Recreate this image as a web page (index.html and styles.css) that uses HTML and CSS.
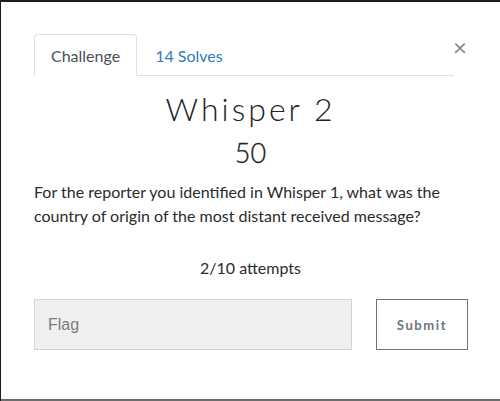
FILE: index.html
```html
<!DOCTYPE html>
<html>
<head>
<meta charset="utf-8">
<link rel="stylesheet" href="styles.css">
</head>
<body>
<div class="modal">
  <div class="tabs-row">
    <ul class="tabs">
      <li class="tab active">Challenge</li>
      <li class="tab link">14 Solves</li>
    </ul>
    <button class="close" aria-label="Close">&times;</button>
  </div>
  <h2 class="title">Whisper 2</h2>
  <h3 class="value">50</h3>
  <p class="desc">For the reporter you identified in Whisper 1, what was the country of origin of the most distant received message?</p>
  <p class="attempts">2/10 attempts</p>
  <div class="submit-row">
    <input class="flag" type="text" placeholder="Flag">
    <button class="submit">Submit</button>
  </div>
</div>
</body>
</html>
```

FILE: styles.css
```css
html, body {
  margin: 0;
  padding: 0;
}
body {
  background: #1b1c1f;
  width: 500px;
  height: 401px;
  overflow: hidden;
  font-family: "Lato", "Open Sans", sans-serif;
  color: #212529;
}
.modal {
  margin: 2px 0 0 1px;
  height: 399px;
  box-sizing: border-box;
  background: #fff;
  border-bottom: 2px solid #6e6e6e;
  padding: 32px 32px 0 33px;
}
.tabs-row {
  display: flex;
  align-items: flex-start;
  width: 420px;
  position: relative;
}
.tabs {
  list-style: none;
  margin: 0;
  padding: 0;
  display: flex;
  flex: 1;
  border-bottom: 1px solid #dee2e6;
}
.tab {
  font-size: 16px;
  line-height: 20px;
  padding: 11px 16px 9px;
  margin-bottom: -1px;
  border: 1px solid transparent;
  border-radius: 4px 4px 0 0;
}
.tab.active {
  color: #495057;
  border-color: #dee2e6 #dee2e6 #fff;
  background: #fff;
}
.tab.link {
  color: #337ab7;
  padding-left: 17px;
}
.close {
  position: absolute;
  right: -13px;
  top: 1px;
  border: none;
  background: none;
  font-family: "Lato", sans-serif;
  font-size: 24px;
  line-height: 24px;
  color: #888;
  padding: 0;
}
.title {
  margin: 14px 0 0;
  text-align: center;
  font-weight: 300;
  font-size: 32px;
  line-height: 38px;
  letter-spacing: 3px;
  color: #222;
  width: 433px;
}
.value {
  margin: 9px 0 0;
  text-align: center;
  font-weight: 300;
  font-size: 27px;
  line-height: 32px;
  color: #222;
  width: 433px;
  -webkit-text-stroke: 0.3px #222;
}
.desc {
  margin: 11px 0 0;
  font-size: 16px;
  line-height: 24px;
  width: 420px;
  color: #2b2b2b;
}
.attempts {
  margin: 30px 0 0;
  text-align: center;
  font-size: 16px;
  line-height: 20px;
  width: 433px;
  color: #2b2b2b;
}
.submit-row {
  display: flex;
  gap: 24px;
  margin-top: 21px;
}
.flag {
  width: 318px;
  height: 51px;
  box-sizing: border-box;
  background: #efefef;
  border: 1px solid #ced4da;
  padding: 0 13px;
  font-family: "Liberation Sans", Arial, sans-serif;
  font-size: 16px;
  color: #333;
}
.flag::placeholder {
  color: #7d7d7d;
}
.submit {
  width: 92px;
  height: 51px;
  box-sizing: border-box;
  background: #fff;
  border: 1px solid #6c757d;
  font-family: "Lato", sans-serif;
  font-weight: 700;
  font-size: 13px;
  letter-spacing: 1.6px;
  color: #6c757d;
}
```
